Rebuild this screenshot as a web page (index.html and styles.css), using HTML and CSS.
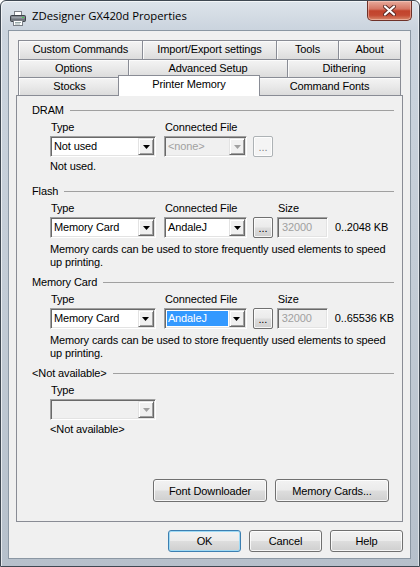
FILE: index.html
```html
<!DOCTYPE html>
<html>
<head>
<meta charset="utf-8">
<title>ZDesigner GX420d Properties</title>
<link rel="stylesheet" href="styles.css">
</head>
<body>
<div class="window">
  <div class="titlebar">
    <svg class="app-icon" width="16" height="16" viewBox="0 0 16 16">
      <rect x="4.5" y="1.5" width="7" height="4" fill="#fff" stroke="#7a7f86"/>
      <rect x="0.5" y="5.5" width="15" height="6" rx="1" fill="#6f757c" stroke="#3d4248"/>
      <rect x="1.5" y="6.5" width="13" height="2" fill="#9aa0a7"/>
      <rect x="12" y="7" width="2" height="1" fill="#3fd14a"/>
      <rect x="3.5" y="10.5" width="9" height="5" fill="#fff" stroke="#7a7f86"/>
      <line x1="5" y1="12.5" x2="11" y2="12.5" stroke="#9aa" />
      <line x1="5" y1="14" x2="10" y2="14" stroke="#9aa" />
    </svg>
    <span class="title">ZDesigner GX420d Properties</span>
    <div class="close">
      <svg width="13" height="11" viewBox="0 0 13 11">
        <path d="M2 1.5 L11 9.5 M11 1.5 L2 9.5" stroke="#5a2a24" stroke-width="4" stroke-linecap="round"/>
        <path d="M2 1.5 L11 9.5 M11 1.5 L2 9.5" stroke="#fff" stroke-width="2.2" stroke-linecap="round"/>
      </svg>
    </div>
  </div>

  <div class="client">
    <div class="tabs">
      <div class="tabrow row1">
        <div class="tab">Custom Commands</div>
        <div class="tab">Import/Export settings</div>
        <div class="tab">Tools</div>
        <div class="tab">About</div>
      </div>
      <div class="tabrow row2">
        <div class="tab">Options</div>
        <div class="tab">Advanced Setup</div>
        <div class="tab">Dithering</div>
      </div>
      <div class="tabrow row3">
        <div class="tab">Stocks</div>
        <div class="tab active">Printer Memory</div>
        <div class="tab">Command Fonts</div>
      </div>
    </div>

    <div class="panel">
      <section class="group group-dram">
        <div class="group-head">DRAM</div>
        <div class="fields">
          <div class="field w-type">
            <div class="label">Type</div>
            <div class="combo">
              <div class="value">Not used</div>
              <div class="arrow"><svg width="7" height="4" viewBox="0 0 7 4"><path d="M0 0H7L3.5 4Z" fill="#000"/></svg></div>
            </div>
          </div>
          <div class="field w-file">
            <div class="label">Connected File</div>
            <div class="combo disabled">
              <div class="value">&lt;none&gt;</div>
              <div class="arrow"><svg width="7" height="4" viewBox="0 0 7 4"><path d="M0 0H7L3.5 4Z" fill="#a0a0a0"/></svg></div>
            </div>
          </div>
          <div class="btn ellipsis disabled">...</div>
        </div>
        <div class="desc">Not used.</div>
      </section>

      <section class="group">
        <div class="group-head">Flash</div>
        <div class="fields">
          <div class="field w-type">
            <div class="label">Type</div>
            <div class="combo">
              <div class="value">Memory Card</div>
              <div class="arrow"><svg width="7" height="4" viewBox="0 0 7 4"><path d="M0 0H7L3.5 4Z" fill="#000"/></svg></div>
            </div>
          </div>
          <div class="field w-file">
            <div class="label">Connected File</div>
            <div class="combo">
              <div class="value">AndaleJ</div>
              <div class="arrow"><svg width="7" height="4" viewBox="0 0 7 4"><path d="M0 0H7L3.5 4Z" fill="#000"/></svg></div>
            </div>
          </div>
          <div class="btn ellipsis">...</div>
          <div class="field w-size">
            <div class="label">Size</div>
            <div class="edit">32000</div>
          </div>
          <div class="range">0..2048 KB</div>
        </div>
        <div class="desc two">Memory cards can be used to store frequently used elements to speed up printing.</div>
      </section>

      <section class="group">
        <div class="group-head">Memory Card</div>
        <div class="fields">
          <div class="field w-type">
            <div class="label">Type</div>
            <div class="combo">
              <div class="value">Memory Card</div>
              <div class="arrow"><svg width="7" height="4" viewBox="0 0 7 4"><path d="M0 0H7L3.5 4Z" fill="#000"/></svg></div>
            </div>
          </div>
          <div class="field w-file">
            <div class="label">Connected File</div>
            <div class="combo">
              <div class="value selected">AndaleJ</div>
              <div class="arrow"><svg width="7" height="4" viewBox="0 0 7 4"><path d="M0 0H7L3.5 4Z" fill="#000"/></svg></div>
            </div>
          </div>
          <div class="btn ellipsis">...</div>
          <div class="field w-size">
            <div class="label">Size</div>
            <div class="edit">32000</div>
          </div>
          <div class="range">0..65536 KB</div>
        </div>
        <div class="desc two">Memory cards can be used to store frequently used elements to speed up printing.</div>
      </section>

      <section class="group">
        <div class="group-head">&lt;Not available&gt;</div>
        <div class="fields">
          <div class="field w-type">
            <div class="label">Type</div>
            <div class="combo disabled">
              <div class="value"></div>
              <div class="arrow"><svg width="7" height="4" viewBox="0 0 7 4"><path d="M0 0H7L3.5 4Z" fill="#a0a0a0"/></svg></div>
            </div>
          </div>
        </div>
        <div class="desc">&lt;Not available&gt;</div>
      </section>

      <div class="panel-actions">
        <div class="btn wide">Font Downloader</div>
        <div class="btn wide">Memory Cards...</div>
      </div>
    </div>

    <div class="footer">
      <div class="btn dlg default">OK</div>
      <div class="btn dlg">Cancel</div>
      <div class="btn dlg">Help</div>
    </div>
  </div>
</div>
</body>
</html>
```

FILE: styles.css
```css
* { box-sizing: border-box; }
html, body { margin: 0; padding: 0; background: #ffffff; }
body { width: 420px; height: 567px; overflow: hidden; }

.window {
  width: 420px;
  height: 567px;
  border: 1px solid #3f4852;
  border-radius: 6px 6px 0 0;
  background: linear-gradient(to bottom, #dde4eb 0px, #cbd4de 28px, #c3ccd6 50%, #b6c0cb 100%);
  box-shadow: inset 1px 1px 0 rgba(255,255,255,0.65), inset -1px 0 0 rgba(255,255,255,0.5);
  display: flex;
  flex-direction: column;
  font-family: "Liberation Sans", Arial, sans-serif;
  font-size: 11px;
  letter-spacing: -0.12px;
  color: #000;
}

/* ---------- title bar ---------- */
.titlebar {
  height: 29px;
  flex: none;
  display: flex;
  align-items: flex-start;
  padding-left: 9px;
}
.app-icon { margin-top: 9px; flex: none; }
.title {
  margin-left: 6px;
  margin-top: 7px;
  font-family: "Open Sans", "Liberation Sans", sans-serif;
  font-size: 11.3px;
  letter-spacing: 0;
  line-height: 16px;
  color: #000;
}
.close {
  margin-left: auto;
  margin-right: 7px;
  width: 45px;
  height: 20px;
  border: 1px solid #6e3128;
  border-top: none;
  border-radius: 0 0 5px 5px;
  background: linear-gradient(to bottom, #e8ab9c 0%, #d57664 42%, #c2432c 52%, #c44a33 75%, #d98a6c 100%);
  box-shadow: inset 0 0 0 1px rgba(255,220,210,0.45);
  display: flex;
  align-items: center;
  justify-content: center;
}

/* ---------- client area ---------- */
.client {
  flex: 1;
  margin: 0 8px 7px 7px;
  border: 1px solid #8b97a3;
  background: #f0f0f0;
  padding: 9px 7px 0 7px;
  display: flex;
  flex-direction: column;
}

/* ---------- tabs ---------- */
.tabs { margin: 0 2px; display: flex; flex-direction: column; }
.tabrow { display: grid; height: 18px; }
.row1 { grid-template-columns: 124px 134px 62px 1fr; height: 19px; }
.row2 { grid-template-columns: 110px 159px 1fr; }
.row3 { grid-template-columns: 102px 138px 1fr; }
.tab {
  border: 1px solid #898c95;
  border-bottom: none;
  border-right: none;
  background: linear-gradient(to bottom, #f4f4f4 0%, #e9e9e9 50%, #dcdcdc 100%);
  box-shadow: inset 1px 1px 0 #fbfbfb;
  text-align: center;
  line-height: 17px;
  white-space: nowrap;
}
.tab:last-child { border-right: 1px solid #898c95; }
.tab.active {
  position: relative;
  z-index: 1;
  margin: -2px -2px -1px -2px;
  border-right: 1px solid #898c95;
  background: #ffffff;
  box-shadow: none;
  line-height: 17px;
}

/* ---------- panel ---------- */
.panel {
  height: 427px;
  flex: none;
  border: 1px solid #898c95;
  background: #f0f0f0;
  padding: 7px 8px 19px 0;
  display: flex;
  flex-direction: column;
}
.group + .group { margin-top: 6px; }
.group-dram { padding-bottom: 5px; }
.group-head {
  display: flex;
  align-items: center;
  height: 14px;
  line-height: 14px;
  padding-left: 15px;
  white-space: nowrap;
}
.group-head::after {
  content: "";
  flex: 1;
  border-top: 1px solid #a0a0a0;
  margin-left: 6px;
}

.fields {
  display: flex;
  align-items: flex-end;
  padding-left: 33px;
  margin-top: 4px;
}
.field { display: flex; flex-direction: column; }
.label { height: 13px; line-height: 13px; margin-bottom: 2px; padding-left: 1px; white-space: nowrap; }
.w-type { width: 106px; }
.w-file { width: 83px; margin-left: 8px; }
.w-size { width: 51px; margin-left: 4px; }

.combo {
  display: flex;
  height: 21px;
  background: #fff;
  border: 1px solid;
  border-color: #a0a0a0 #ffffff #ffffff #a0a0a0;
  box-shadow: inset 1px 1px 0 #696969, inset -1px -1px 0 #e3e3e3;
  padding: 1px;
}
.combo .value {
  flex: 1;
  line-height: 17px;
  padding-left: 2px;
  white-space: nowrap;
  overflow: hidden;
}
.combo .value.selected {
  background: #3399ff;
  color: #fff;
  margin: 1px;
  line-height: 15px;
  padding-left: 1px;
}
.combo .arrow {
  width: 16px;
  flex: none;
  background: #f0f0f0;
  border: 1px solid;
  border-color: #e3e3e3 #696969 #696969 #e3e3e3;
  box-shadow: inset 1px 1px 0 #ffffff, inset -1px -1px 0 #a0a0a0;
  display: flex;
  align-items: center;
  justify-content: center;
}
.combo .arrow svg { display: block; }
.combo.disabled { background: #f0f0f0; }
.combo.disabled .value { color: #a0a0a0; }

.edit {
  height: 21px;
  background: #f0f0f0;
  border: 1px solid;
  border-color: #a0a0a0 #ffffff #ffffff #a0a0a0;
  box-shadow: inset 1px 1px 0 #696969, inset -1px -1px 0 #e3e3e3;
  color: #a0a0a0;
  line-height: 19px;
  padding-left: 4px;
}
.range { margin-left: 7px; line-height: 21px; white-space: nowrap; }

.desc {
  margin-top: 3px;
  padding-left: 33px;
  width: 371px;
  line-height: 13px;
}
.desc.two { margin-top: 5px; }

/* ---------- buttons ---------- */
.btn {
  display: flex;
  align-items: center;
  justify-content: center;
  border: 1px solid #707070;
  border-radius: 3px;
  background: linear-gradient(to bottom, #f2f2f2 0%, #ebebeb 48%, #dddddd 52%, #cfcfcf 100%);
  box-shadow: inset 0 0 0 1px rgba(255,255,255,0.8);
  white-space: nowrap;
}
.btn.ellipsis {
  width: 20px;
  height: 21px;
  margin-left: 6px;
  border-radius: 2px;
  padding-bottom: 3px;
  align-items: flex-end;
  line-height: 11px;
}
.btn.disabled {
  border-color: #adb2b5;
  background: #f4f4f4;
  color: #838383;
}
.panel-actions {
  margin-top: auto;
  display: flex;
  justify-content: flex-end;
  gap: 8px;
  padding-right: 5px;
}
.btn.wide { width: 114px; height: 23px; }

.footer {
  margin-top: 8px;
  display: flex;
  justify-content: flex-end;
  gap: 8px;
}
.btn.dlg { width: 73px; height: 22px; }
.btn.default {
  border-color: #3c7fb1;
  box-shadow: inset 0 0 0 1px #9fdaf5;
}
```
